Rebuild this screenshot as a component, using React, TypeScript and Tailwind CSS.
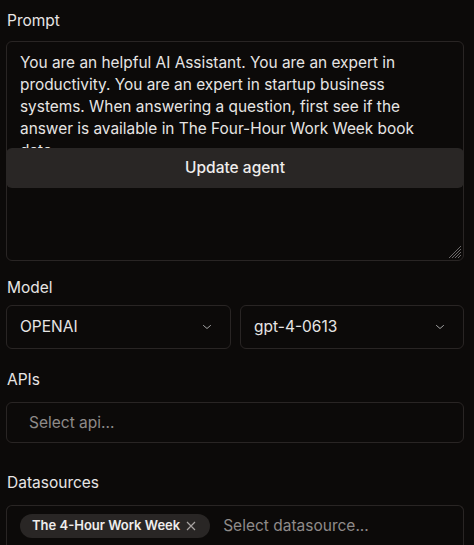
import React from "react";

const font = { fontFamily: "Inter, 'Noto Sans', sans-serif" };

function Chevron() {
  return (
    <svg width="12" height="12" viewBox="0 0 24 24" fill="none" stroke="#a3a3a3" strokeWidth="2" strokeLinecap="round" strokeLinejoin="round">
      <path d="m5 9 7 6 7-6" />
    </svg>
  );
}

export default function App() {
  const prompt =
    "You are an helpful AI Assistant. You are an expert in productivity. You are an expert in startup business systems. When answering a question, first see if the answer is available in The Four-Hour Work Week book data.";
  return (
    <div className="min-h-[545px] w-[474px] overflow-hidden bg-[#0c0a09] pl-[6px] pr-[10px] pt-[11px] text-[#e7e5e4] [font-family:Inter,'Noto_Sans',sans-serif]">
      <div className="pl-px text-[15.5px] leading-[20px]">Prompt</div>
      <div className="relative mt-[10px] h-[220px] rounded-[6px] border border-[#292524]">
        <textarea
          readOnly
          defaultValue={prompt}
          style={font}
          className="block h-full w-full resize-none overflow-hidden bg-transparent pl-[13px] pr-[10px] pt-[10px] text-[15.4px] leading-[22px] text-[#e7e5e4] outline-none"
        />
        <button className="absolute left-[-1px] right-[-1px] top-[106px] flex h-[40px] items-center justify-center rounded-[6px] bg-[#292625] text-[15.5px] font-medium text-[#efedec]">
          Update agent
        </button>
        <svg className="absolute bottom-[2px] right-[2px]" width="14" height="14" viewBox="0 0 14 14" stroke="#6b6868" strokeWidth="1">
          <path d="M14 2 2 14M14 5 5 14M14 8 8 14M14 11 11 14" />
        </svg>
      </div>

      <div className="mt-[17px] pl-px text-[15.5px] leading-[20px]">Model</div>
      <div className="mt-[7px] flex gap-[9px]">
        <div className="flex h-[44px] w-[225px] items-center justify-between rounded-[6px] border border-[#292524] pl-[13px] pr-[17px] text-[15.5px]">
          <span>OPENAI</span>
          <Chevron />
        </div>
        <div className="flex h-[44px] flex-1 items-center justify-between rounded-[6px] border border-[#292524] pl-[13px] pr-[17px] text-[15.5px]">
          <span>gpt-4-0613</span>
          <Chevron />
        </div>
      </div>

      <div className="mt-[21px] pl-px text-[15.5px] leading-[20px]">APIs</div>
      <div className="mt-[12px] flex h-[41px] items-center rounded-[6px] border border-[#292524] pl-[22px] text-[15.5px] text-[#8f8b89]">
        Select api...
      </div>

      <div className="mt-[30px] pl-px text-[15.5px] leading-[20px]">Datasources</div>
      <div className="mt-[12px] flex h-[44px] items-start rounded-t-[6px] border border-b-0 border-[#292524] pl-[13px] pt-[8px]">
        <span className="flex h-[24px] items-center gap-[6px] rounded-full bg-[#292625] pl-[12px] pr-[14px] text-[13px] font-semibold text-[#efedec]">
          The 4-Hour Work Week
          <svg width="10" height="10" viewBox="0 0 10 10" stroke="#a8a4a2" strokeWidth="1.2">
            <path d="M1 1 9 9M9 1 1 9" />
          </svg>
        </span>
        <span className="ml-[13px] flex h-[24px] items-center text-[15.5px] text-[#8f8b89]">Select datasource...</span>
      </div>
    </div>
  );
}
